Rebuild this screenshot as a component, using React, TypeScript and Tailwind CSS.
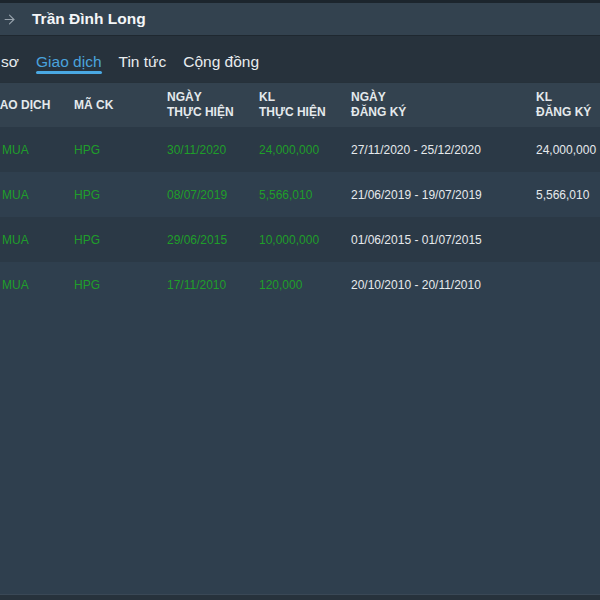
import { ArrowRight } from 'lucide-react'

interface Trade {
  side: string
  code: string
  doneDate: string
  doneQty: string
  regRange: string
  regQty: string
}

const trades: Trade[] = [
  { side: 'MUA', code: 'HPG', doneDate: '30/11/2020', doneQty: '24,000,000', regRange: '27/11/2020 - 25/12/2020', regQty: '24,000,000' },
  { side: 'MUA', code: 'HPG', doneDate: '08/07/2019', doneQty: '5,566,010', regRange: '21/06/2019 - 19/07/2019', regQty: '5,566,010' },
  { side: 'MUA', code: 'HPG', doneDate: '29/06/2015', doneQty: '10,000,000', regRange: '01/06/2015 - 01/07/2015', regQty: '' },
  { side: 'MUA', code: 'HPG', doneDate: '17/11/2010', doneQty: '120,000', regRange: '20/10/2010 - 20/11/2010', regQty: '' },
]

const cols = 'grid grid-cols-[87px_93px_92px_92px_185px_1fr] items-center'

export default function App() {
  return (
    <div
      className="w-[600px] h-[600px] overflow-hidden bg-[#2f3f4e] flex flex-col"
      style={{ fontFamily: '"Liberation Sans", Arial, sans-serif' }}
    >
      <div className="h-[3px] bg-[#1c252d] shrink-0" />

      <div className="h-[32px] bg-[#33424f] flex items-center gap-[15px] pl-[2px] shrink-0">
        <ArrowRight size={15} strokeWidth={1.75} className="text-[#98a3ad]" />
        <span className="text-[15.5px] font-bold text-[#f4f6f8]">Trần Đình Long</span>
      </div>

      <div className="h-[1px] bg-[#1f2830] shrink-0" />

      <div className="h-[46px] bg-[#27323c] flex items-stretch gap-[17px] -ml-[23px] shrink-0">
        <div className="flex items-center text-[15.5px] text-[#e8ecef] pt-[5px]">Hồ sơ</div>
        <div className="relative flex items-center text-[15.5px] text-[#4aa3dc] pt-[5px]">
          Giao dịch
          <div className="absolute left-0 right-0 top-[35px] h-[3px] rounded-full bg-[#4aa8e2]" />
        </div>
        <div className="flex items-center text-[15.5px] text-[#e8ecef] pt-[5px]">Tin tức</div>
        <div className="flex items-center text-[15.5px] text-[#e8ecef] pt-[5px]">Cộng đồng</div>
      </div>

      <div className="h-[1px] bg-[#26313a] shrink-0" />

      <div className={`${cols} h-[44px] bg-[#33424f] -ml-[13px] text-[12px] font-bold text-[#e4e9ec] leading-[15px] shrink-0`}>
        <div className="pt-[1px]">GIAO DỊCH</div>
        <div className="pt-[1px]">MÃ CK</div>
        <div>NGÀY<br />THỰC HIỆN</div>
        <div>KL<br />THỰC HIỆN</div>
        <div>NGÀY<br />ĐĂNG KÝ</div>
        <div>KL<br />ĐĂNG KÝ</div>
      </div>

      {trades.map((t, i) => (
        <div
          key={i}
          className={`${cols} h-[45px] -ml-[13px] text-[12px] pt-[1px] shrink-0 ${i % 2 === 0 ? 'bg-[#2b3946]' : 'bg-[#2f3f4e]'}`}
        >
          <div className="text-[#1f9e2a] pl-[15px]">{t.side}</div>
          <div className="text-[#1f9e2a]">{t.code}</div>
          <div className="text-[#1f9e2a]">{t.doneDate}</div>
          <div className="text-[#1f9e2a]">{t.doneQty}</div>
          <div className="text-[#e6eaed]">{t.regRange}</div>
          <div className="text-[#e6eaed]">{t.regQty}</div>
        </div>
      ))}

      <div className="flex-1" />
      <div className="h-[6px] bg-[#27323c] border-t border-[#3a4856] shrink-0" />
    </div>
  )
}
